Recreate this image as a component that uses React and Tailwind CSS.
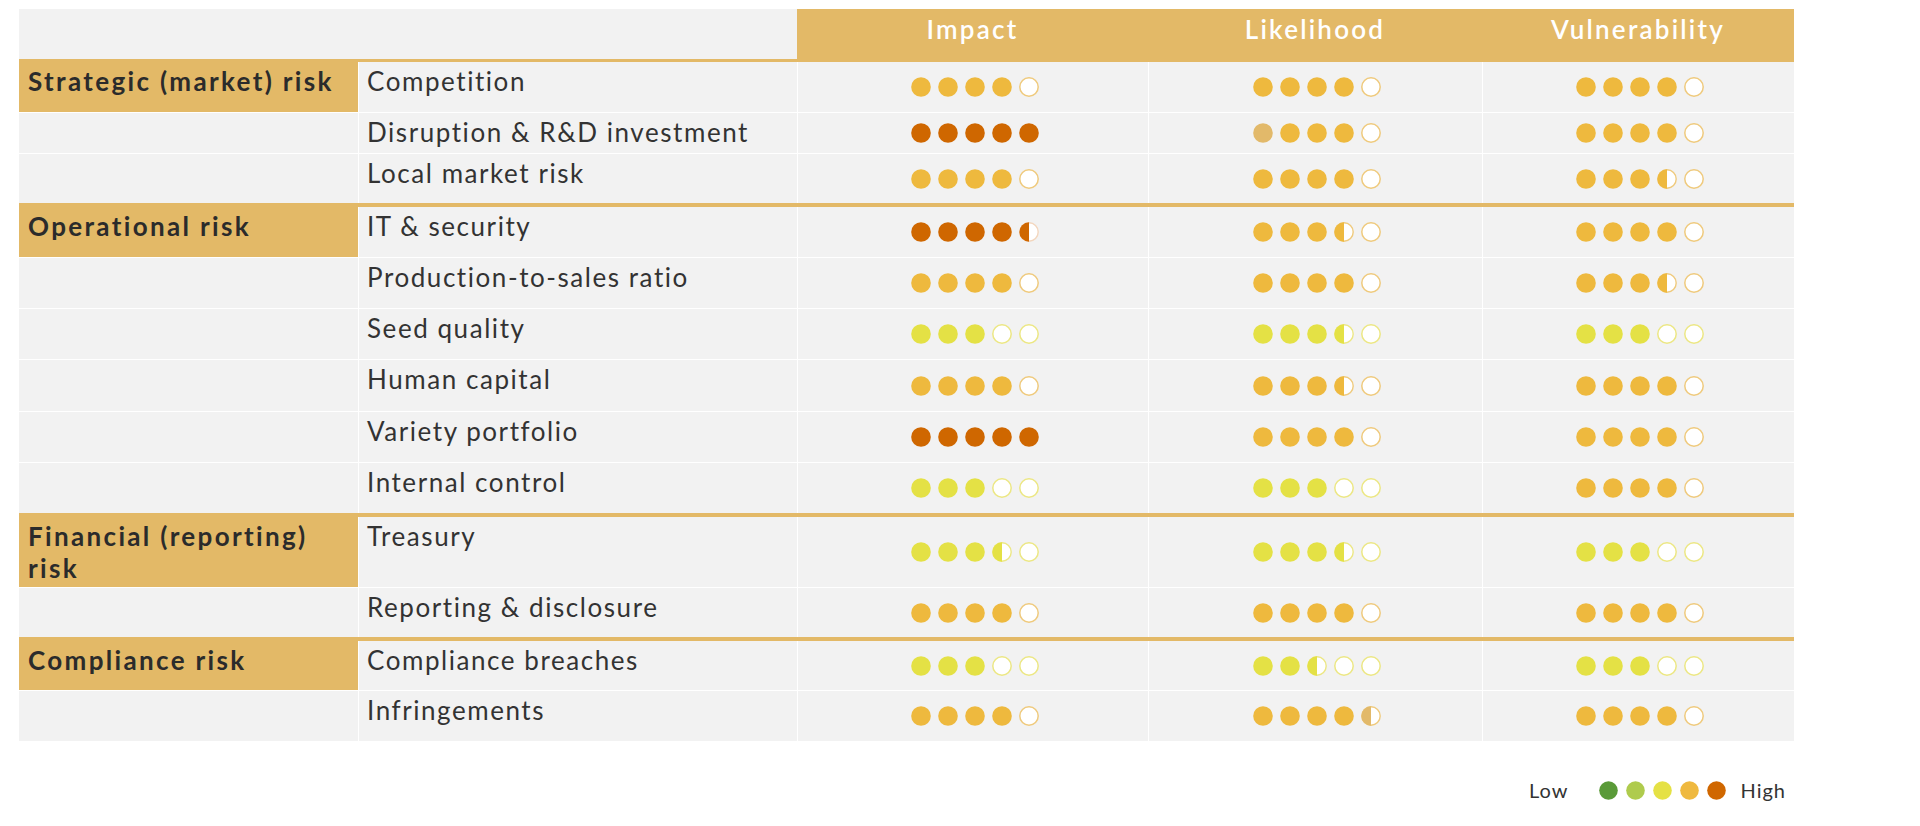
import React from 'react';

const PALETTE = {
    gold: { fill: '#eeb93e', border: '#efca7d' },
    orange: { fill: '#cf6700', border: '#f3d6bd' },
    yellow: { fill: '#e4e145', border: '#ece784' },
};
const TAN = '#e2b96a';

// F = full, H = half, T = full tan, t = half tan, . = empty
const groups = [
    {
        name: 'Strategic (market) risk',
        border: 'border-t-[3px]',
        rows: [
            { label: 'Competition', h: 'h-[50px]', cells: [['gold', 'FFFF.'], ['gold', 'FFFF.'], ['gold', 'FFFF.']] },
            { label: 'Disruption & R&D investment', h: 'h-[40px]', cells: [['orange', 'FFFFF'], ['gold', 'TFFF.'], ['gold', 'FFFF.']] },
            { label: 'Local market risk', h: 'h-[49px]', cells: [['gold', 'FFFF.'], ['gold', 'FFFF.'], ['gold', 'FFFH.']] },
        ],
    },
    {
        name: 'Operational risk',
        border: 'border-t-4',
        rows: [
            { label: 'IT & security', h: 'h-[50px]', cells: [['orange', 'FFFFH'], ['gold', 'FFFH.'], ['gold', 'FFFF.']] },
            { label: 'Production-to-sales ratio', h: 'h-[50px]', cells: [['gold', 'FFFF.'], ['gold', 'FFFF.'], ['gold', 'FFFH.']] },
            { label: 'Seed quality', h: 'h-[50px]', cells: [['yellow', 'FFF..'], ['yellow', 'FFFH.'], ['yellow', 'FFF..']] },
            { label: 'Human capital', h: 'h-[51px]', cells: [['gold', 'FFFF.'], ['gold', 'FFFH.'], ['gold', 'FFFF.']] },
            { label: 'Variety portfolio', h: 'h-[50px]', cells: [['orange', 'FFFFF'], ['gold', 'FFFF.'], ['gold', 'FFFF.']] },
            { label: 'Internal control', h: 'h-[50px]', cells: [['yellow', 'FFF..'], ['yellow', 'FFF..'], ['gold', 'FFFF.']] },
        ],
    },
    {
        name: 'Financial (reporting) risk',
        border: 'border-t-4',
        rows: [
            { label: 'Treasury', h: 'h-[70px]', cells: [['yellow', 'FFFH.'], ['yellow', 'FFFH.'], ['yellow', 'FFF..']] },
            { label: 'Reporting & disclosure', h: 'h-[49px]', cells: [['gold', 'FFFF.'], ['gold', 'FFFF.'], ['gold', 'FFFF.']] },
        ],
    },
    {
        name: 'Compliance risk',
        border: 'border-t-4',
        rows: [
            { label: 'Compliance breaches', h: 'h-[49px]', cells: [['yellow', 'FFF..'], ['yellow', 'FFH..'], ['yellow', 'FFF..']] },
            { label: 'Infringements', h: 'h-[50px]', cells: [['gold', 'FFFF.'], ['gold', 'FFFFt'], ['gold', 'FFFF.']] },
        ],
    },
];

const Dot = ({ type, base }) => {
    const { fill, border } = PALETTE[base];
    if (type === 'F' || type === 'T') {
        return (
            <svg width="20" height="20" viewBox="0 0 20 20">
                <circle cx="10" cy="10" r="9.8" fill={type === 'T' ? TAN : fill} />
            </svg>
        );
    }
    if (type === 'H' || type === 't') {
        return (
            <svg width="20" height="20" viewBox="0 0 20 20">
                <circle cx="10" cy="10" r="9.2" fill="#fff" stroke={border} strokeWidth="1.4" />
                <path d="M10 0.3 A9.7 9.7 0 0 0 10 19.7 Z" fill={type === 't' ? TAN : fill} />
            </svg>
        );
    }
    return (
        <svg width="20" height="20" viewBox="0 0 20 20">
            <circle cx="10" cy="10" r="9.2" fill="#fff" stroke={border} strokeWidth="1.5" />
        </svg>
    );
};

const DotCell = ({ base, dots }) => (
    <div className="bg-[#f2f2f2] flex items-center justify-center gap-[7px] pl-[3px]">
        {dots.split('').map((d, i) => (
            <Dot key={i} type={d} base={base} />
        ))}
    </div>
);

const legendColors = ['#5a9a38', '#afcb4d', '#e5e145', '#efb93f', '#d06700'];

const App = () => {
    return (
        <div className="min-h-screen bg-white pt-[9px] pl-[19px] font-['Lato','Noto_Sans',sans-serif]">
            <div className="w-[1775px]">
                {/* header */}
                <div className="grid grid-cols-[778px_351px_334px_312px] h-[50px]">
                    <div className="bg-[#f2f2f2]"></div>
                    {['Impact', 'Likelihood', 'Vulnerability'].map((t) => (
                        <div key={t} className="bg-[#e3b967] text-white text-[26px] leading-[31px] font-semibold tracking-[0.085em] text-center pt-[5px]">
                            {t}
                        </div>
                    ))}
                </div>

                {groups.map((group) => (
                    <div key={group.name} className={`${group.border} border-[#e3b967] flex flex-col gap-px`}>
                        {group.rows.map((row, idx) => (
                            <div key={row.label} className={`grid grid-cols-[339px_438px_350px_333px_311px] gap-x-px ${row.h}`}>
                                {idx === 0 ? (
                                    <div className="bg-[#e3b967] pl-[9px] pr-2 pt-[3px] text-[26px] leading-[32px] font-bold tracking-[0.09em] text-[#2b2b2b]">
                                        {group.name}
                                    </div>
                                ) : (
                                    <div className="bg-[#f2f2f2]"></div>
                                )}
                                <div className="bg-[#f2f2f2] pl-2 pt-[3px] text-[26px] leading-[32px] tracking-[0.06em] text-[#333333] whitespace-nowrap">
                                    {row.label}
                                </div>
                                {row.cells.map(([base, dots], i) => (
                                    <DotCell key={i} base={base} dots={dots} />
                                ))}
                            </div>
                        ))}
                    </div>
                ))}

                {/* legend */}
                <div className="mt-[37px] h-[24px] flex items-center justify-end pr-[8px] text-[20px] tracking-[0.05em] text-[#333]">
                    <span>Low</span>
                    <div className="flex items-center gap-[8px] ml-[30px] mr-[15px]">
                        {legendColors.map((c) => (
                            <svg key={c} width="19" height="19" viewBox="0 0 20 20">
                                <circle cx="10" cy="10" r="9.8" fill={c} />
                            </svg>
                        ))}
                    </div>
                    <span>High</span>
                </div>
            </div>
        </div>
    );
};

export default App;
